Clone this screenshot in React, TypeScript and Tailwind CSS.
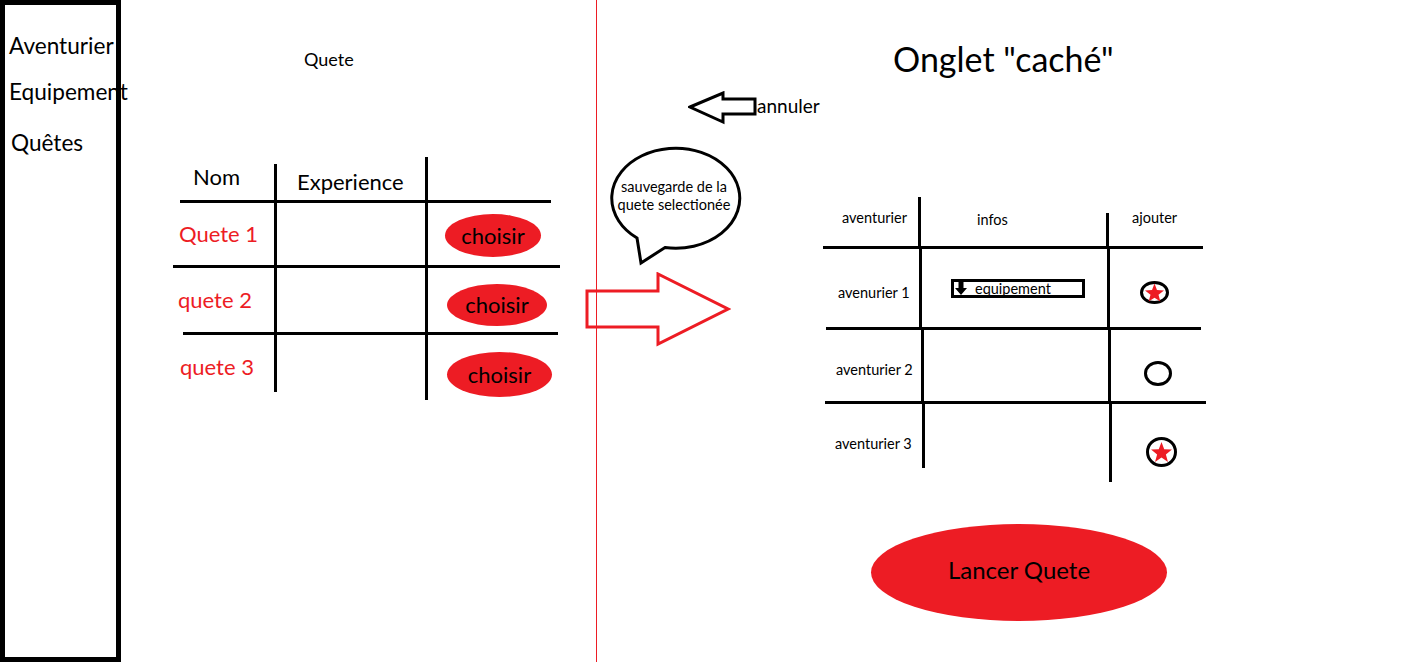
const RED = "#ed1c24";

function StarCircle({ w, h, r, empty }: { w: number; h: number; r: number; empty?: boolean }) {
  const cx = w / 2;
  const cy = h / 2;
  const pts: string[] = [];
  for (let i = 0; i < 10; i++) {
    const rad = i % 2 === 0 ? r : r * 0.42;
    const a = -Math.PI / 2 + (i * Math.PI) / 5;
    pts.push(`${(cx + rad * Math.cos(a)).toFixed(2)},${(cy + 1 + rad * Math.sin(a)).toFixed(2)}`);
  }
  return (
    <svg width={w} height={h} className="block">
      <ellipse cx={cx} cy={cy} rx={w / 2 - 1.5} ry={h / 2 - 1.5} fill="none" stroke="#000" strokeWidth={3} />
      {!empty && <polygon points={pts.join(" ")} fill={RED} />}
    </svg>
  );
}

function Sidebar() {
  return (
    <aside className="h-[662px] w-[121px] shrink-0 border-[5px] border-black pl-[4px] pt-[30px] text-[22.6px] leading-[22px]">
      <div className="whitespace-nowrap">Aventurier</div>
      <div className="mt-[24px] whitespace-nowrap">Equipement</div>
      <div className="ml-[2px] mt-[29px] whitespace-nowrap">Quêtes</div>
    </aside>
  );
}

function Choisir({ w, h, mt, ml }: { w: string; h: string; mt: string; ml: string }) {
  return (
    <div className={`${w} ${h} ${mt} ${ml} flex items-center justify-center rounded-[50%] bg-[#ed1c24] text-[22px] leading-[22px]`}>
      choisir
    </div>
  );
}

function QuestTable() {
  return (
    <div className="ml-[52px] mt-[89px] flex w-[387px] flex-col">
      <div className="flex h-[43px]">
        <div className="w-[101px] pl-[20px] pt-[9px] text-[22px] leading-[22px]">Nom</div>
        <div className="h-[36px] w-[3px] self-end bg-black" />
        <div className="w-[148px] pl-[20px] pt-[14px] text-[22px] leading-[22px]">Experience</div>
        <div className="w-[3px] bg-black" />
      </div>
      <div className="ml-[7px] h-[3px] w-[371px] bg-black" />

      <div className="flex h-[62px]">
        <div className="w-[101px] pl-[6px] pt-[20px] text-[22px] leading-[22px] text-[#ed1c24]">Quete 1</div>
        <div className="w-[3px] bg-black" />
        <div className="w-[148px]" />
        <div className="w-[3px] bg-black" />
        <Choisir w="w-[96px]" h="h-[43px]" mt="mt-[11px]" ml="ml-[17px]" />
      </div>
      <div className="h-[3px] w-[387px] bg-black" />

      <div className="flex h-[64px]">
        <div className="w-[101px] pl-[5px] pt-[21px] text-[22px] leading-[22px] text-[#ed1c24]">quete 2</div>
        <div className="w-[3px] bg-black" />
        <div className="w-[148px]" />
        <div className="w-[3px] bg-black" />
        <Choisir w="w-[100px]" h="h-[42px]" mt="mt-[16px]" ml="ml-[19px]" />
      </div>
      <div className="ml-[10px] h-[3px] w-[375px] bg-black" />

      <div className="flex h-[65px]">
        <div className="w-[101px] pl-[7px] pt-[21px] text-[22px] leading-[22px] text-[#ed1c24]">quete 3</div>
        <div className="h-[57px] w-[3px] self-start bg-black" />
        <div className="w-[148px]" />
        <div className="w-[3px] bg-black" />
        <Choisir w="w-[105px]" h="h-[45px]" mt="mt-[17px]" ml="ml-[19px]" />
      </div>
    </div>
  );
}

function SpeechBubble() {
  return (
    <div className="relative ml-[13px] h-[120px] w-[132px]">
      <svg width={132} height={120} className="absolute inset-0">
        <path d="M 55 101.5 A 64 50 0 1 0 27 92 L 31 117 Z" fill="#fff" stroke="#000" strokeWidth={3} />
      </svg>
      <div className="absolute left-0 top-[32px] w-[128px] text-center text-[14.5px] leading-[18px]">
        sauvegarde de la
        <br />
        quete selectionée
      </div>
    </div>
  );
}

function AdventurerTable() {
  return (
    <div className="mt-[51px] flex w-[384px] flex-col text-[14.5px] leading-[14.5px]">
      <div className="flex h-[49px]">
        <div className="w-[95px] pl-[19px] pt-[14px]">aventurier</div>
        <div className="w-[3px] bg-black" />
        <div className="w-[185px] pl-[56px] pt-[16px]">infos</div>
        <div className="h-[33px] w-[3px] self-end bg-black" />
        <div className="pl-[23px] pt-[14px]">ajouter</div>
      </div>
      <div className="h-[3px] w-[380px] bg-black" />

      <div className="flex h-[78px]">
        <div className="w-[96px] pl-[15px] pt-[37px]">avenurier 1</div>
        <div className="w-[3px] bg-black" />
        <div className="w-[185px] pl-[29px] pt-[30px]">
          <div className="flex h-[19px] w-[134px] items-center border-[3px] border-black pl-[1px]">
            <svg width={12} height={13} viewBox="0 0 12 13" className="block shrink-0">
              <path d="M3.5 0 H8.5 V6 H12 L6 13 L0 6 H3.5 Z" fill="#000" />
            </svg>
            <span className="ml-[8px] leading-[13px]">equipement</span>
          </div>
        </div>
        <div className="w-[3px] bg-black" />
        <div className="pl-[30px] pt-[32px]">
          <StarCircle w={29} h={23} r={10} />
        </div>
      </div>
      <div className="ml-[3px] h-[3px] w-[375px] bg-black" />

      <div className="flex h-[71px]">
        <div className="w-[98px] pl-[13px] pt-[33px]">aventurier 2</div>
        <div className="w-[3px] bg-black" />
        <div className="w-[184px]" />
        <div className="w-[3px] bg-black" />
        <div className="pl-[33px] pt-[31px]">
          <StarCircle w={28} h={25} r={0} empty />
        </div>
      </div>
      <div className="ml-[2px] h-[3px] w-[381px] bg-black" />

      <div className="flex h-[78px]">
        <div className="w-[99px] pl-[12px] pt-[33px]">aventurier 3</div>
        <div className="h-[64px] w-[3px] self-start bg-black" />
        <div className="w-[184px]" />
        <div className="w-[3px] bg-black" />
        <div className="pl-[34px] pt-[33px]">
          <StarCircle w={31} h={30} r={11} />
        </div>
      </div>
    </div>
  );
}

export default function App() {
  return (
    <div className="flex h-[662px] w-[1410px] overflow-hidden bg-white font-['Lato',sans-serif] text-black">
      <Sidebar />

      {/* quest list */}
      <section className="flex w-[475px] shrink-0 flex-col">
        <div className="ml-[183px] mt-[50px] text-[18px] leading-[18px]">Quete</div>
        <QuestTable />
      </section>

      <div className="w-px shrink-0 bg-[#ed1c24]" />

      {/* hidden tab */}
      <section className="flex w-[813px] shrink-0 flex-col">
        <div className="ml-[296px] mt-[42px] whitespace-nowrap text-[34px] leading-[33px]">Onglet "caché"</div>

        <div className="ml-[91px] mt-[16px] flex items-start">
          <svg width={69} height={34} viewBox="0 0 69 34" className="block">
            <path d="M2 16 L35 2 L35 8 L67 8 L67 23 L35 23 L35 31 Z" fill="none" stroke="#000" strokeWidth={3} />
          </svg>
          <span className="mt-[5px] text-[19px] leading-[19px]">annuler</span>
        </div>

        <div className="mt-[21px] flex">
          <div className="flex w-[226px] shrink-0 flex-col">
            <SpeechBubble />
            <svg width={146} height={75} viewBox="0 0 146 75" className="-ml-[12px] mt-[6px] block">
              <path d="M2 19 L73 19 L73 2 L143 37 L73 72 L73 55 L2 55 Z" fill="none" stroke={RED} strokeWidth={3} />
            </svg>
          </div>

          <div className="flex flex-col">
            <AdventurerTable />
            <button className="ml-[48px] mt-[42px] flex h-[97px] w-[296px] items-center justify-center rounded-[50%] bg-[#ed1c24] pb-[6px] text-[24px] leading-[24px] text-black">
              Lancer Quete
            </button>
          </div>
        </div>
      </section>
    </div>
  );
}
